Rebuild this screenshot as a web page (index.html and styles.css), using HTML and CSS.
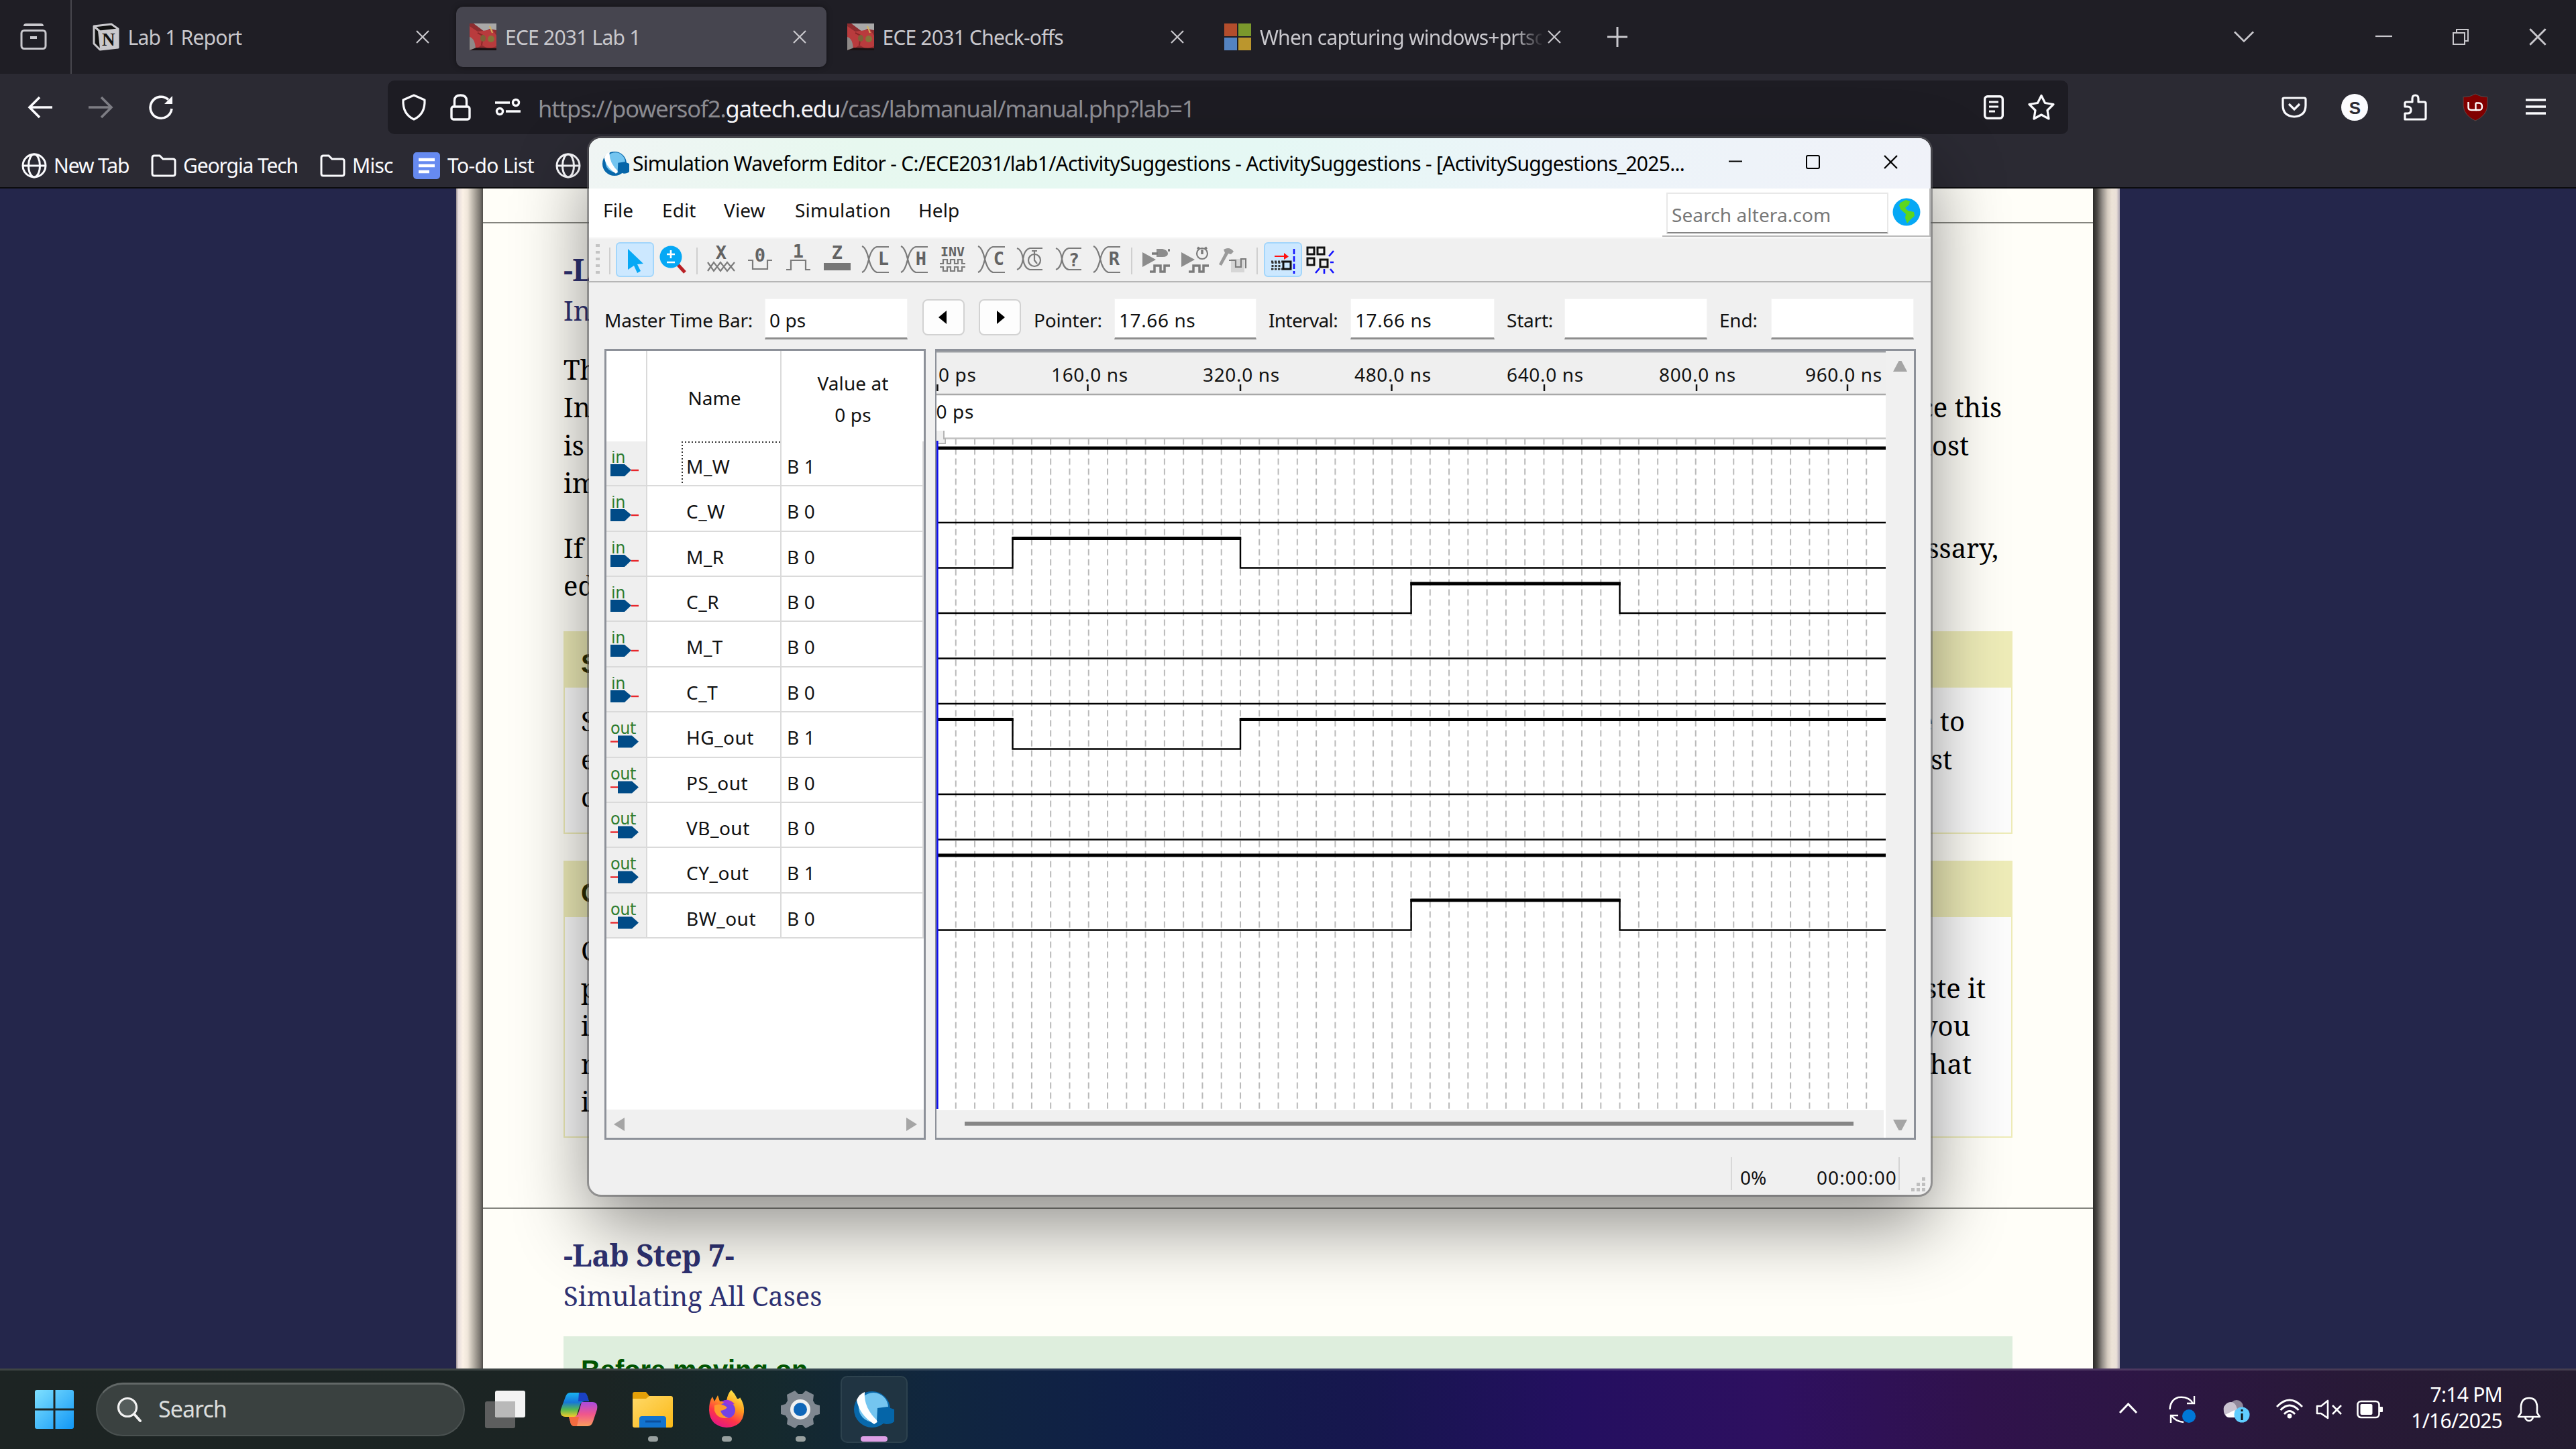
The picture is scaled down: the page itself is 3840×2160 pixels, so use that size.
FILE: index.html
```html
<!DOCTYPE html>
<html lang="en">
<head>
<meta charset="utf-8">
<title>ECE 2031 Lab 1</title>
<link rel="stylesheet" href="styles.css">
</head>
<body>
<svg class="defs" aria-hidden="true">
  <defs>
    <symbol id="x" viewBox="0 0 20 20"><path d="M1 1 19 19M19 1 1 19" fill="none" stroke="currentColor" stroke-width="2.2"/></symbol>
    <symbol id="globe" viewBox="0 0 38 38"><g fill="none" stroke="currentColor" stroke-width="3"><circle cx="19" cy="19" r="17"/><ellipse cx="19" cy="19" rx="8.5" ry="17"/><path d="M2 19H36"/></g></symbol>
    <symbol id="folder" viewBox="0 0 38 34"><path d="M2 29V5Q2 2 5 2H13L18 7H33Q36 7 36 10V29Q36 32 33 32H5Q2 32 2 29Z" fill="none" stroke="currentColor" stroke-width="3"/></symbol>
    <symbol id="car" viewBox="0 0 40 40"><path d="M0 0H40V40H0Z" fill="#8d2c2f"/><path d="M6 0H40V10L30 8 22 12Z" fill="#a9a8a8"/><path d="M0 4 12 12 34 9 40 18V34L28 38 18 32 10 38 0 22Z" fill="#b93b3d"/><path d="M12 14 20 18 18 32" fill="none" stroke="#8c2629" stroke-width="2"/><path d="M0 20Q8 22 9 38L0 40Z" fill="#8e8a88"/><path d="M10 36 40 37V40H0Z" fill="#1b1112"/><ellipse cx="20" cy="22" rx="4" ry="5" fill="#7c6238"/><ellipse cx="32" cy="23" rx="5" ry="5" fill="#85743a"/><path d="M30 4 34 14" stroke="#d4b45c" stroke-width="2"/></symbol>
    <symbol id="quartus" viewBox="0 0 60 56"><ellipse cx="27" cy="28" rx="27" ry="27" fill="#0868ab"/><ellipse cx="29" cy="25" rx="22" ry="22" fill="#74c5f0"/><path d="M4 14Q8 5 16 2Q14 26 36 46L30 50Q8 36 4 14Z" fill="#fff"/><path d="M35 26 50 24Q54 26 60 28V46Q56 50 48 50L34 46Z" fill="#0565a8"/></symbol>
    <symbol id="pin-in" viewBox="0 0 44 44"><text x="1" y="18" class="pin-label">in</text><path d="M0 20H21L31 28.500 21 38H0Z" fill="#004b87"/><path d="M31 29H42" stroke="#e8272c" stroke-width="2.400"/></symbol>
    <symbol id="pin-out" viewBox="0 0 44 44"><text x="0" y="18" class="pin-label">out</text><path d="M11 20.500H32L42 29.500 32 38.500H11Z" fill="#004b87"/><path d="M0 29.500H11" stroke="#e8272c" stroke-width="2.400"/></symbol>
    <pattern id="grid" x="1423.800" y="654.500" width="28.280" height="15" patternUnits="userSpaceOnUse"><path d="M1 0V9.400" stroke="#b9b9b9" stroke-width="2"/></pattern>
    <linearGradient id="win" x1="0" y1="0" x2="1" y2="1"><stop offset="0" stop-color="#7fe0ff"/><stop offset="1" stop-color="#1197f5"/></linearGradient>
    <linearGradient id="cpa" x1="0" y1="0" x2="0" y2="1"><stop offset="0" stop-color="#19b3f2"/><stop offset=".4" stop-color="#1676d8"/><stop offset=".7" stop-color="#55b84f"/><stop offset="1" stop-color="#f4cb2b"/></linearGradient>
    <linearGradient id="cpb" x1="0" y1="0" x2="0" y2="1"><stop offset="0" stop-color="#a94be0"/><stop offset=".5" stop-color="#f0568c"/><stop offset="1" stop-color="#fb9d5c"/></linearGradient>
    <linearGradient id="fold" x1="0" y1="0" x2="1" y2="1"><stop offset="0" stop-color="#ffd968"/><stop offset="1" stop-color="#fbb917"/></linearGradient>
    <linearGradient id="fox" x1=".8" y1="0" x2=".3" y2="1"><stop offset="0" stop-color="#fff44f"/><stop offset=".4" stop-color="#ff9a1f"/><stop offset=".7" stop-color="#ff3647"/><stop offset="1" stop-color="#e31587"/></linearGradient>
  </defs>
</svg>

<header class="browser">
  <nav class="tabs">
    <div class="tab-view"><svg width="40" height="40" viewBox="0 0 40 40"><path d="M7 4Q7 2 9 2H31Q33 2 33 4" fill="none" stroke="currentColor" stroke-width="4"/><rect x="2" y="10.500" width="36" height="27" rx="4" fill="none" stroke="currentColor" stroke-width="3"/><path d="M15 21H25" stroke="currentColor" stroke-width="4"/></svg></div>
    <div class="tab"><svg width="40" height="40" viewBox="0 0 40 40"><path d="M2 4 28 1 38 8V36L11 39 2 30Z" fill="#111" stroke="#c9c8cc" stroke-width="3" stroke-linejoin="round"/><path d="M8 11 37 9V36L11 38Z" fill="#c9c8cc"/><path d="M3 5 11 12 37 9" fill="none" stroke="#c9c8cc" stroke-width="3"/><path d="M13 14 34 12.500V34L14 35.500Z" fill="#c9c8cc"/><text x="14" y="33" font-family="Liberation Serif" font-size="27" font-weight="700" fill="#111">N</text></svg><span class="tab-title">Lab 1 Report</span><svg class="close"><use href="#x"/></svg></div>
    <div class="tab active"><svg width="40" height="40"><use href="#car"/></svg><span class="tab-title">ECE 2031 Lab 1</span><svg class="close"><use href="#x"/></svg></div>
    <div class="tab"><svg width="40" height="40"><use href="#car"/></svg><span class="tab-title">ECE 2031 Check-offs</span><svg class="close"><use href="#x"/></svg></div>
    <div class="tab"><svg width="40" height="40" viewBox="0 0 40 40"><path d="M0 0H19V19H0Z" fill="#b34d2c"/><path d="M21 0H40V19H21Z" fill="#7a982c"/><path d="M0 21H19V40H0Z" fill="#5483c1"/><path d="M21 21H40V40H21Z" fill="#bb962d"/></svg><span class="tab-title fade">When capturing windows+prtsc</span><svg class="close"><use href="#x"/></svg></div>
    <svg class="new-tab" width="30" height="30" viewBox="0 0 30 30"><path d="M15 0V30M0 15H30" stroke="currentColor" stroke-width="3"/></svg>
    <div class="controls">
      <svg class="list-tabs" width="30" height="18" viewBox="0 0 30 18"><path d="M1 1.500 15 15.500 29 1.500" fill="none" stroke="currentColor" stroke-width="2.600"/></svg>
      <svg width="25" height="24" viewBox="0 0 25 24"><path d="M0 11H25" stroke="currentColor" stroke-width="2.200"/></svg>
      <svg width="24" height="24" viewBox="0 0 24 24"><path d="M1 6H18V23H1ZM6 6V1H23V18H18" fill="none" stroke="currentColor" stroke-width="2"/></svg>
      <svg width="26" height="26"><use href="#x"/></svg>
    </div>
  </nav>

  <div class="toolbar">
    <svg width="36" height="36" viewBox="0 0 36 36"><path d="M36 18H2M17 3 2 18 17 33" fill="none" stroke="currentColor" stroke-width="3.600"/></svg>
    <svg class="dim" width="36" height="36" viewBox="0 0 36 36"><path d="M0 18H34M19 3 34 18 19 33" fill="none" stroke="currentColor" stroke-width="3.600"/></svg>
    <svg width="36" height="36" viewBox="0 0 36 36"><path d="M34 20A16 16 0 1 1 29 6.500" fill="none" stroke="currentColor" stroke-width="3.600"/><path d="M35 1V13H23Z" fill="currentColor"/></svg>
    <div class="url">
      <svg width="36" height="40" viewBox="0 0 36 40"><path d="M18 2 34 9Q35 30 18 38 1 30 2 9Z" fill="none" stroke="currentColor" stroke-width="3.200" stroke-linejoin="round"/></svg>
      <svg width="31" height="40" viewBox="0 0 31 40"><rect x="2" y="19" width="27" height="19" rx="3" fill="none" stroke="currentColor" stroke-width="3.400"/><path d="M6.500 19V10Q6.500 2 15.500 2T24.500 10V19" fill="none" stroke="currentColor" stroke-width="3.400"/></svg>
      <svg class="perm" width="38" height="26" viewBox="0 0 38 26"><g fill="none" stroke="currentColor" stroke-width="3.400"><circle cx="31" cy="6" r="4.500"/><circle cx="7" cy="19" r="4.500"/><path d="M0 6H22M16 19H38"/></g></svg>
      <p class="address">https://powersof2.<b>gatech.edu</b>/cas/labmanual/manual.php?lab=1</p>
      <svg width="30" height="36" viewBox="0 0 30 36"><rect x="1.700" y="1.700" width="26.600" height="32.600" rx="4" fill="none" stroke="currentColor" stroke-width="3.400"/><path d="M8 10H22M8 17H22M8 24H17" stroke="currentColor" stroke-width="3.200"/></svg>
      <svg class="star" width="40" height="40" viewBox="0 0 40 40"><path d="M20 2.500 25.500 13.500 38 15.500 29 24.500 31 37 20 31 9 37 11 24.500 2 15.500 14.500 13.500Z" fill="none" stroke="currentColor" stroke-width="3.200" stroke-linejoin="round"/></svg>
    </div>
    <div class="extensions">
      <svg width="40" height="40" viewBox="0 0 40 40"><path d="M3 7Q3 6 5 6H35Q37 6 37 8V17Q37 33 20 34 3 33 3 17Z" fill="none" stroke="currentColor" stroke-width="3.200"/><path d="M12 15 20 23 28 15" fill="none" stroke="currentColor" stroke-width="3.200"/></svg>
      <svg width="40" height="40" viewBox="0 0 40 40"><circle cx="20" cy="20" r="20" fill="#fbfbfe"/><text x="20" y="29.500" text-anchor="middle" font-family="Liberation Sans" font-weight="700" font-size="26" fill="#2b2a33">S</text></svg>
      <svg width="40" height="40" viewBox="0 0 40 40"><path d="M5 38V29H9Q14 29 14 24T9 19H5V14Q5 12 7 12H16V7Q16 2 20.500 2T25 7V12H34Q36 12 36 14V36Q36 38 34 38Z" fill="none" stroke="currentColor" stroke-width="3.200" stroke-linejoin="round"/></svg>
      <svg width="40" height="40" viewBox="0 0 40 40"><path d="M20 0Q28 5 38 4.500V18Q37 32 20 40 3 32 2 18V4.500Q12 5 20 0Z" fill="#800000" stroke="#555" stroke-width=".8"/><path d="M9.500 12V20Q9.500 24 14 24H20.500V13.500" fill="none" stroke="#fff" stroke-width="2.400"/><path d="M20.500 13.500H25Q30 13.500 30 19T25 24H20.500" fill="none" stroke="#fff" stroke-width="2.400"/></svg>
      <svg width="40" height="40" viewBox="0 0 40 40"><path d="M5 9H35M5 19H35M5 29H35" stroke="currentColor" stroke-width="3.400"/></svg>
    </div>
  </div>

  <div class="bookmarks">
    <span class="bm w1"><svg width="38" height="38"><use href="#globe"/></svg>New Tab</span>
    <span class="bm w2"><svg width="38" height="34"><use href="#folder"/></svg>Georgia Tech</span>
    <span class="bm w3"><svg width="38" height="34"><use href="#folder"/></svg>Misc</span>
    <span class="bm w4"><svg width="40" height="40" viewBox="0 0 40 40"><rect width="40" height="40" rx="5" fill="#668af0"/><path d="M8 11H32M8 20H32M8 29H24" stroke="#fff" stroke-width="4.500"/></svg>To-do List</span>
    <span class="bm"><svg width="38" height="38"><use href="#globe"/></svg></span>
  </div>
</header>

<main class="desk">
  <article class="page">
    <section class="step six">
      <h2>-Lab Step 6-</h2>
      <h3>In-System</h3>
      <div class="para"><p><span>Th</span></p><p><span>In</span><span class="r16">since this</span></p><p><span>is</span><span class="r65">most</span></p><p><span>im</span></p></div>
      <div class="para second"><p><span>If</span><span class="r21">necessary,</span></p><p><span>ed</span></p></div>
      <div class="note"><h4>S</h4><div class="note-body"><p><span>S</span><span class="r71">have to</span></p><p><span>e</span><span class="r91">most</span></p><p><span>c</span></p></div></div>
      <div class="note"><h4>C</h4><div class="note-body"><p><span>C</span></p><p><span>p</span><span class="r41">paste it</span></p><p><span>i</span><span class="r63">you</span></p><p><span>n</span><span class="r61">that</span></p><p><span>i</span></p></div></div>
    </section>
    <section class="step">
      <h2>-Lab Step 7-</h2>
      <h3>Simulating All Cases</h3>
      <div class="note green"><h4>Before moving on</h4></div>
    </section>
  </article>
</main>

<div class="window">
  <div class="titlebar">
    <svg width="40" height="40"><use href="#quartus"/></svg>
    <span class="title">Simulation Waveform Editor - C:/ECE2031/lab1/ActivitySuggestions - ActivitySuggestions - [ActivitySuggestions_2025...</span>
    <div class="win-controls">
      <svg width="20" height="20" viewBox="0 0 20 20"><path d="M0 9.500H20" stroke="#000" stroke-width="2"/></svg>
      <svg width="21" height="21" viewBox="0 0 21 21"><rect x="1" y="1" width="19" height="19" rx="2" fill="none" stroke="#000" stroke-width="2"/></svg>
      <svg width="21" height="21"><use href="#x"/></svg>
    </div>
  </div>

  <div class="menubar">
    <span class="m1">File</span><span class="m2">Edit</span><span class="m3">View</span><span class="m4">Simulation</span><span>Help</span>
    <div class="search-altera"><span class="field">Search altera.com</span><svg width="42" height="42" viewBox="0 0 42 42"><circle cx="21" cy="21" r="20.500" fill="#06a8f5"/><path d="M12 7 20 3 26 5 25 10 19 15 23 19 32 21 33 27 27 32 22 38 19 30 20 24 12 17 10 11Z" fill="#5cd71c"/></svg></div>
  </div>

  <div class="tools">
    <i class="grip"></i><i class="sep s1"></i>
    <span class="tool on"><svg width="42" height="42" viewBox="0 0 42 42"><path d="M10 5 33 27 24 28 29 38 24 41 19 30 10 36Z" fill="#06a8f5"/></svg></span>
    <span class="tool"><svg width="42" height="42" viewBox="0 0 42 42"><path d="M27 28 38 40" stroke="#b92025" stroke-width="5"/><circle cx="17" cy="17" r="16.500" fill="#06a8f5"/><path d="M17 7V19M11 13H23M11 25H23" stroke="#fff" stroke-width="2.600"/></svg></span>
    <i class="sep s2"></i>
    <span class="tool gray"><svg viewBox="0 0 42 42"><text x="21" y="20">X</text><path class="l" d="M1 25 10 38 20 25 30 38 41 25M1 38 10 25 20 38 30 25 41 38"/></svg></span>
    <span class="tool gray"><svg viewBox="0 0 42 42"><text x="21" y="24">0</text><path class="l" d="M3 22H10V35H32V22H39"/></svg></span>
    <span class="tool gray"><svg viewBox="0 0 42 42"><text x="21" y="18">1</text><path class="l" d="M3 36H10V22H32V36H39"/></svg></span>
    <span class="tool gray"><svg viewBox="0 0 42 42"><text x="21" y="20">Z</text><path fill="#777" d="M1 26H41V37H1Z"/></svg></span>
    <span class="tool gray"><svg viewBox="0 0 42 42"><path class="l" d="M1 1Q7 3 11 20T23 40H41M1 40Q7 38 11 21T23 2H41"/><text x="33" y="29">L</text></svg></span>
    <span class="tool gray"><svg viewBox="0 0 42 42"><path class="l" d="M1 1Q7 3 11 20T23 40H41M1 40Q7 38 11 21T23 2H41"/><text x="31" y="29">H</text></svg></span>
    <span class="tool gray"><svg viewBox="0 0 42 42"><text class="inv" x="21" y="16">INV</text><path class="l" d="M2 27H7V21H13V27H18V21H24V27H29V21H35V27H40M2 32H7V38H13V32H18V38H24V32H29V38H35V32H40"/></svg></span>
    <span class="tool gray"><svg viewBox="0 0 42 42"><path class="l" d="M1 1Q7 3 11 20T23 40H41M1 40Q7 38 11 21T23 2H41"/><text x="32" y="29">C</text></svg></span>
    <span class="tool gray"><svg viewBox="0 0 42 42"><path class="l" d="M2 4Q9 6 11 20T21 36H40M2 36Q9 34 11 20T21 4H40"/><circle class="l" cx="28" cy="22" r="9"/><path class="l" d="M28 8V22L32 27M24 8H32"/></svg></span>
    <span class="tool gray"><svg viewBox="0 0 42 42"><path class="l" d="M2 4Q9 6 11 20T21 36H40M2 36Q9 34 11 20T21 4H40"/><text x="29" y="31">?</text></svg></span>
    <span class="tool gray"><svg viewBox="0 0 42 42"><path class="l" d="M1 1Q7 3 11 20T23 40H41M1 40Q7 38 11 21T23 2H41"/><text x="32" y="29">R</text></svg></span>
    <i class="sep s3"></i>
    <span class="tool gray"><svg viewBox="0 0 42 42"><path fill="#8c8c8c" d="M1 10 21 21 1 32ZM22 5H31Q39 7 39 12T31 17H22Z"/><path class="l w" d="M39 7H42M15 12H24M12 39H19V30H28V39H34V30H42"/></svg></span>
    <span class="tool gray"><svg viewBox="0 0 42 42"><path fill="#8c8c8c" d="M1 10 21 21 1 32Z"/><circle class="l" cx="32" cy="12" r="8"/><path class="l w" d="M32 6V13M25 3 28 5M39 3 36 5M12 39H19V30H28V39H34V30H42"/></svg></span>
    <span class="tool gray"><svg viewBox="0 0 42 42"><path fill="#9a9a9a" d="M7 6Q16 1 22 9L18 13 14 12 4 30 0 28 9 11Z"/><path d="M18 20H38V40H18Z" fill="#d6d6d6"/><path class="l" d="M15 22H25V32H33V20H40V34"/></svg></span>
    <i class="sep s4"></i>
    <span class="tool on"><svg width="42" height="42" viewBox="0 0 42 42"><path d="M8 15H22V11L29 16.500 22 21V17H8Z" fill="#f11"/><path d="M3 24H20M3 35H20M5 24V36M10 24V36M15 24V36" stroke="#333" stroke-width="3" stroke-dasharray="3 2"/><path d="M21 24H32V35H21Z" fill="none" stroke="#111" stroke-width="3"/><path d="M37 5V42" stroke="#1313ff" stroke-width="2.600" stroke-dasharray="8 3"/></svg></span>
    <span class="tool last"><svg width="42" height="42" viewBox="0 0 42 42"><path d="M2 3H12V13H2ZM17 3H27V13H17ZM2 19H12V29H2ZM21 21H32V32H21Z" fill="none" stroke="#111" stroke-width="3"/><path d="M34 16 41 8M36 25H41M20 34 14 41M27 35V42M36 35 41 41" stroke="#1313ff" stroke-width="2.600"/></svg></span>
  </div>

  <div class="times">
    <label class="t1">Master Time Bar:</label><span class="field f1">0 ps</span>
    <span class="step-btn b1"><svg width="12" height="20" viewBox="0 0 12 20"><path d="M12 0V20L0 10Z"/></svg></span><span class="step-btn b2"><svg width="12" height="20" viewBox="0 0 12 20"><path d="M0 0V20L12 10Z"/></svg></span>
    <label class="t2">Pointer:</label><span class="field f2 num">17.66 ns</span>
    <label class="t3">Interval:</label><span class="field f3 num">17.66 ns</span>
    <label class="t4">Start:</label><span class="field f4"></span>
    <label class="t5">End:</label><span class="field f4"></span>
  </div>

  <div class="panels">
    <div class="names">
      <div class="row head"><span></span><span>Name</span><span>Value at<br>0 ps</span></div>
      <div class="row"><span><svg><use href="#pin-in"/></svg></span><span class="focus">M_W</span><span>B 1</span></div>
      <div class="row"><span><svg><use href="#pin-in"/></svg></span><span>C_W</span><span>B 0</span></div>
      <div class="row"><span><svg><use href="#pin-in"/></svg></span><span>M_R</span><span>B 0</span></div>
      <div class="row"><span><svg><use href="#pin-in"/></svg></span><span>C_R</span><span>B 0</span></div>
      <div class="row"><span><svg><use href="#pin-in"/></svg></span><span>M_T</span><span>B 0</span></div>
      <div class="row"><span><svg><use href="#pin-in"/></svg></span><span>C_T</span><span>B 0</span></div>
      <div class="row"><span><svg><use href="#pin-out"/></svg></span><span>HG_out</span><span>B 1</span></div>
      <div class="row"><span><svg><use href="#pin-out"/></svg></span><span>PS_out</span><span>B 0</span></div>
      <div class="row"><span><svg><use href="#pin-out"/></svg></span><span>VB_out</span><span>B 0</span></div>
      <div class="row"><span><svg><use href="#pin-out"/></svg></span><span>CY_out</span><span>B 1</span></div>
      <div class="row"><span><svg><use href="#pin-out"/></svg></span><span>BW_out</span><span>B 0</span></div>
      <div class="names-scroll"><svg width="16" height="20" viewBox="0 0 16 20"><path d="M16 0V20L0 10Z" fill="#a5a5a5"/></svg><svg width="16" height="20" viewBox="0 0 16 20"><path d="M0 0V20L16 10Z" fill="#a5a5a5"/></svg></div>
    </div>

    <div class="waves">
      <div class="wave-col">
        <svg class="plot" width="1415" height="1132" viewBox="1396 524 1415 1132">
          <path d="M1396 524H2811V588H1396Z" fill="#efefef"/>
          <path d="M1396 525H2811" stroke="#9a9da2" stroke-width="3"/>
          <path d="M1396 589H2811" stroke="#a8a8a8" stroke-width="2.500"/>
          <g stroke="#111" stroke-width="2.500"><path d="M1397.500 574V584M1621.500 574V584M1849 574V584M2074.500 574V584M2302 574V584M2529 574V584M2754 574V584"/></g>
          <g class="ticks"><text x="1399" y="569.500">0 ps</text><text x="1567" y="569.500">160.0 ns</text><text x="1793" y="569.500">320.0 ns</text><text x="2019" y="569.500">480.0 ns</text><text x="2246" y="569.500">640.0 ns</text><text x="2473" y="569.500">800.0 ns</text><text x="2691" y="569.500">960.0 ns</text><text x="1395.500" y="625">0 ps</text></g>
          <path d="M1423 655H2786V1654H1423Z" fill="url(#grid)"/>
          <path d="M1396 654.500H2811" stroke="#c0c0c0" stroke-width="2.500"/>
          <path d="M1396 643H1407V661H1396Z" fill="#efefef"/><path d="M1407 643V655H1409V662H1398" fill="none" stroke="#b5b5b5" stroke-width="2"/>
          <g fill="none" stroke="#000" stroke-width="2.400">
            <path d="M1396 780H2811M1396 982.500H2811M1396 1050H2811M1396 1185H2811M1396 1252.500H2811"/>
            <path d="M1396 847.500H1509.500V802M1849 802V847.500H2811"/>
            <path d="M1396 915H2103.600V869M2414.500 869V915H2811"/>
            <path d="M1509.500 1072V1117.500H1849V1072"/>
            <path d="M1396 1387.500H2103.600V1341M2414.500 1341V1387.500H2811"/>
          </g>
          <g stroke="#000" stroke-width="5"><path d="M1396 669H2811M1508.400 803.500H1850.200M2102.400 871H2415.700M1396 1073.500H1510.700M1847.800 1073.500H2811M1396 1276H2811M2102.400 1343H2415.700"/></g>
          <path d="M1397 658V1654" stroke="#1010f0" stroke-width="3.400"/>
        </svg>
        <div class="wave-scroll"><i></i></div>
      </div>
      <div class="vscroll"><svg width="21" height="16" viewBox="0 0 21 16"><path d="M0 16H21L12.500 0H8.500Z" fill="#a5a5a5"/></svg><svg width="21" height="16" viewBox="0 0 21 16"><path d="M0 0H21L12.500 16H8.500Z" fill="#a5a5a5"/></svg></div>
    </div>
  </div>

  <div class="status"><span class="pct">0%</span><span class="clock">00:00:00</span><svg width="22" height="22" viewBox="0 0 22 22"><path d="M16 0H21V5H16ZM8 8H13V13H8ZM16 8H21V13H16ZM0 16H5V21H0ZM8 16H13V21H8ZM16 16H21V21H16Z" fill="#bfbfbf"/></svg></div>
</div>

<footer class="taskbar">
  <svg class="start" width="58" height="58" viewBox="0 0 58 58"><path d="M0 3Q0 0 3 0H27.500V27.500H0ZM30.500 0H55Q58 0 58 3V27.500H30.500ZM0 30.500H27.500V58H3Q0 58 0 55ZM30.500 30.500H58V55Q58 58 55 58H30.500Z" fill="url(#win)"/></svg>
  <div class="search"><svg width="38" height="38" viewBox="0 0 38 38"><circle cx="16" cy="16" r="13.500" fill="#555d5c" stroke="#f2f2f2" stroke-width="3.200"/><path d="M26 26 35 36" stroke="#f2f2f2" stroke-width="4" stroke-linecap="round"/></svg><span>Search</span></div>
  <div class="apps">
    <span class="app"><svg width="60" height="60" viewBox="0 0 60 60"><rect x="0" y="18" width="45" height="40" rx="3" fill="#5d5e5e"/><rect x="15" y="2" width="45" height="40" rx="3" fill="#f3f3f3"/><path d="M15 18H45V42H18Q15 42 15 39Z" fill="#b9b9b9"/></svg></span>
    <span class="app"><svg width="60" height="60" viewBox="0 0 60 60"><path d="M17 5H37Q41 5 43 12L45 18H38Q33 18 31 25L26 41H10Q1 41 3 30L10 11Q12 5 17 5Z" fill="url(#cpa)"/><path d="M30 5H38Q42 6 43 12L45 18H29Z" fill="#1a41c4"/><path d="M43 55H23Q18 55 17 48L15 41H23Q27 41 30 33L34 19H50Q59 19 57 30L51 48Q49 55 43 55Z" fill="url(#cpb)"/><path d="M15 41H30L27 55H23Q18 55 17 48Z" fill="#f36b3f"/></svg></span>
    <span class="app run"><svg width="60" height="60" viewBox="0 0 60 60"><path d="M0 7Q0 4 3 4H20L25 10V20H0Z" fill="#e3a008"/><path d="M0 14H20L25 10H57Q60 10 60 13V54Q60 57 57 57H3Q0 57 0 54Z" fill="url(#fold)"/><path d="M10 57V44Q10 40 14 40H46Q50 40 50 44V57Z" fill="#1273cf"/><path d="M19 48H42" stroke="#0a4f9e" stroke-width="3"/></svg></span>
    <span class="app run"><svg width="60" height="60" viewBox="0 0 60 60"><path d="M37 1Q43 7 46 14 50 14 50 12 57 22 56 34 54 56 30 57 5 55 4 31 4 18 9 11L12 18 17 9 20 18 30 17Q32 6 37 1Z" fill="url(#fox)"/><circle cx="31" cy="31" r="12" fill="#7542e4"/><path d="M12 24Q22 20 31 27 28 31 21 32 24 41 33 42 17 46 12 32Z" fill="#ff9a2b"/><path d="M23 18Q33 12 42 22L34 24Z" fill="#9a35d8"/></svg></span>
    <span class="app run"><svg width="60" height="60" viewBox="0 0 60 60"><path d="M22 2 27 7H33L38 2 50 8 49 17 52 22 59 24V37L52 39 49 44 50 52 38 58 33 53H27L22 58 10 52 11 44 8 39 1 37V24L8 22 11 17 10 8Z" fill="#7f8790"/><circle cx="30" cy="30" r="15" fill="#f1f1f1"/><circle cx="30" cy="30" r="10" fill="#0f66b8"/></svg></span>
    <span class="app current"><svg width="60" height="56"><use href="#quartus"/></svg></span>
  </div>
  <div class="tray">
    <svg width="40" height="40" viewBox="0 0 40 40"><path d="M7 25 19.500 12 32 25" fill="none" stroke="#fff" stroke-width="3"/></svg>
    <svg class="g40" width="40" height="40" viewBox="0 0 40 40"><path d="M1.500 20Q2 6 14 2 30 0 36 11M38 0V11H27M22 39Q10 38 4 29M3 40V29H14" fill="none" stroke="#fff" stroke-width="2.400"/><circle cx="30" cy="30" r="10" fill="#0078d7"/></svg>
    <svg class="g40" width="40" height="40" viewBox="0 0 40 40"><circle cx="21" cy="16" r="10" fill="#8f879a"/><path d="M2 24Q0 14 8 10 16 7 20 14L26 30H10Q3 30 2 24Z" fill="#c9c3d0"/><path d="M4 28 18 21V32H10Q6 32 4 28Z" fill="#fff"/><circle cx="29" cy="28" r="11.500" fill="#60cdff"/><path d="M29 26V36M29 20V23" stroke="#111" stroke-width="3"/></svg>
    <svg class="g40" width="40" height="40" viewBox="0 0 40 40"><g fill="none" stroke="#fff" stroke-width="2.800"><path d="M1 16Q20-4 39 16M6.500 21Q20 7 33.500 21M12 27Q20 18 28 27"/></g><circle cx="20" cy="30" r="3.400" fill="#fff"/></svg>
    <svg class="g19" width="40" height="40" viewBox="0 0 40 40"><path d="M2 15H8L18 7V33L8 26H2Z" fill="none" stroke="#fff" stroke-width="2.600" stroke-linejoin="round"/><path d="M25 14 38 27M38 14 25 27" stroke="#fff" stroke-width="2.600"/></svg>
    <svg class="g21" width="40" height="40" viewBox="0 0 40 40"><rect x="1.500" y="8" width="32" height="24" rx="5" fill="none" stroke="#fff" stroke-width="2.600"/><rect x="5.500" y="12" width="18" height="16" rx="2" fill="#fff"/><path d="M34 16H38Q39 16 39 17V23Q39 24 38 24H34Z" fill="#fff"/></svg>
    <div class="when">7:14 PM<br>1/16/2025</div>
    <svg class="bell" width="40" height="40" viewBox="0 0 40 40"><path d="M4 31 8 25V15Q9 3 20 3T32 15V25L36 31Z" fill="none" stroke="#fff" stroke-width="2.600" stroke-linejoin="round"/><path d="M14 32Q16 37 20 37T26 32" fill="none" stroke="#fff" stroke-width="2.600"/></svg>
  </div>
</footer>
</body>
</html>
```
FILE: styles.css
```css
* { box-sizing: border-box; }
html, body { margin: 0; }
body {
  width: 3840px; height: 2160px; overflow: hidden; position: relative;
  display: flex; flex-direction: column;
  font: 30px/40px "Noto Sans", sans-serif; background: #24264b;
}
p, h2, h3, h4 { margin: 0; font-weight: 400; }
svg { display: block; flex: none; overflow: visible; }
.defs { position: absolute; width: 0; height: 0; }

/* browser chrome */
.browser { height: 281px; flex: none; background: #2b2a33; border-bottom: 2px solid #0c0c0e; color: #fbfbfe; letter-spacing: -.78px; }
.tabs { height: 110px; background: #1f1e25; display: flex; align-items: center; color: #c9c8cd; }
.tab-view { width: 107px; height: 110px; padding: 35px 0 0 30px; border-right: 2px solid #47464d; }
.tab { width: 552px; height: 90px; margin-left: 10.5px; padding: 0 30px 0 20px; display: flex; align-items: center; border-radius: 10px; }
.tab.active { background: #46454f; box-shadow: 0 0 8px rgba(0,0,0,.4); }
.tab-title { flex: 1; margin: 2px 9px 0 13px; white-space: nowrap; overflow: hidden; }
.tab-title.fade { mask-image: linear-gradient(90deg, #000 90%, transparent 101%); }
.close { width: 20px; height: 20px; }
.new-tab { margin-left: 39px; }
.controls { margin-left: auto; padding-right: 44px; display: flex; align-items: center; gap: 90px; }
.list-tabs { margin-right: 91px; }

.toolbar { height: 90px; padding: 10px 40px 0 42px; display: flex; align-items: center; gap: 54px; }
.dim { opacity: .4; }
.url { width: 2505px; height: 80px; margin-left: 266px; padding: 0 20px 0 21px; border-radius: 10px; background: #1d1c23; display: flex; align-items: center; gap: 36px; }
.address { flex: 1; margin: 3px 0 0 -10px; font-size: 34.5px; letter-spacing: -1.1px; color: #8f8f95; white-space: nowrap; }
.address b { font-weight: 400; color: #fbfbfe; }
.extensions { margin-left: auto; display: flex; gap: 50px; }

.bookmarks { height: 80px; padding: 13px 0 0 32px; display: flex; align-items: center; }
.bm { display: flex; align-items: center; gap: 10px; white-space: nowrap; }
.w1 { width: 193px; letter-spacing: -1.1px; } .w2 { width: 252px; letter-spacing: -1.1px; } .w3 { width: 139px; } .w4 { width: 212px; gap: 11px; letter-spacing: -.65px; }

/* lab manual page */
.desk { flex: 1; overflow: hidden; display: flex; justify-content: center; }
.page { width: 2480px; height: 1759px; padding-top: 50px; overflow: hidden;
  background:
    linear-gradient(90deg, #9c9293 0, #e6dcdc 3px, #fbf1e6 10px, #efe6da 17px, #b0aaa0 27px, #77736d 36px, #4e4c48 40px) 0 0/40px 100% no-repeat,
    linear-gradient(90deg, #2a2927 0, #4b4845 6px, #96908a 14px, #d6ccc1 22px, #ece3d7 28px, #eae0d8 35px, #a6a0b0 40px) 100% 0/40px 100% no-repeat,
    #fffef8;
  font: 40px/56.4px "Noto Serif", serif; color: #000; }
.step { margin: 0 40px; padding: 38px 120px 0; border-top: 2px solid #85857f; }
.six { height: 1469px; }
.step h2 { font-weight: 700; font-size: 45px; line-height: 62px; letter-spacing: -.62px; color: #2f3272; }
.step h3 { font-size: 40px; line-height: 60px; color: #2f3272; margin-bottom: 30px; letter-spacing: 0; }
.step p { height: 56.4px; display: flex; justify-content: space-between; white-space: nowrap; }
.second { margin-top: 40px; }
.r16 { margin-right: 16px; } .r65 { margin-right: 65px; } .r21 { margin-right: 21px; }
.r71 { margin-right: 43px; } .r91 { margin-right: 62px; } .r41 { margin-right: 12px; } .r63 { margin-right: 35px; } .r61 { margin-right: 33px; }
.note { margin-top: 40px; border: 2px solid #eeecb8; background: #fcfcfc; }
.note h4 { height: 82px; padding: 10px 24px 0; background: #eeecb8; font: 700 40px/72px "Liberation Sans", sans-serif; color: #2d2d00; }
.note-body { padding: 22px 26px 24px 24px; }
.green { margin-top: 0; border-color: #deeedd; background: #deeedd; }
.green h4 { background: none; color: #005500; letter-spacing: -.1px; padding-top: 12px; }

/* editor window */
.window { position: absolute; left: 878px; top: 206px; width: 2000px; height: 1575px; border-radius: 18px; overflow: hidden;
  display: flex; flex-direction: column; background: #f0f0f0; color: #111; font-size: 28px; letter-spacing: .1px;
  box-shadow: 0 0 0 3px rgba(95,95,98,.55), 0 45px 110px rgba(0,0,0,.45); }
.titlebar { height: 75px; flex: none; padding: 0 49px 0 20px; display: flex; align-items: center; gap: 5px; font-size: 30px; letter-spacing: -.71px; color: #000;
  background: linear-gradient(100deg, #f0f5f4 0, #e7f8ef 20%, #e5f8f4 50%, #ecf4f9 72%, #f0f2f9 100%); }
.title { white-space: nowrap; }
.win-controls { margin: -5px 0 0 auto; display: flex; gap: 95px; align-items: center; }
.menubar { height: 75px; flex: none; padding-left: 21px; background: #fff; border-bottom: 2px solid #f4f4f4; display: flex; line-height: 64px; }
.m1 { width: 88px; } .m2 { width: 92px; } .m3 { width: 106px; } .m4 { width: 184px; letter-spacing: .25px; }
.search-altera { margin-left: auto; width: 400px; height: 72px; padding: 6px 13px 0 6px; display: flex; justify-content: space-between; border: solid #b9b9b9; border-width: 0 2px 2px 0; }
.search-altera .field { width: 331px; height: 61px; line-height: 63px; color: #777; border: 2px solid #e8e8e8; border-bottom-color: #868686; }
.search-altera svg { margin-top: 8px; }
.field { background: #fff; border: 1px solid #f4f4f4; border-bottom: 3px solid #8d8d8d; padding-left: 6px; white-space: nowrap; }

.tools { height: 65px; flex: none; padding: 5px 0 0 10px; display: flex; align-items: flex-start; border-bottom: 2px solid #b6b6b6; }
.grip { width: 6px; height: 48px; margin-top: 3px; background: repeating-linear-gradient(#c4c4c4 0 4px, transparent 4px 10px); }
.sep { width: 2px; height: 40px; margin-top: 8px; background: #cfcfcf; }
.s1 { margin: 8px 8px 0 14px; } .s2 { margin-left: 6px; margin-right: 6.5px; } .s3 { margin-left: 7px; margin-right: 6.5px; } .s4 { margin-left: 6px; margin-right: 9px; }
.tool { width: 57px; height: 52px; display: flex; align-items: center; justify-content: center; border-radius: 6px; }
.tool.on { background: #cce8ff; border: 2px solid #a3d6fb; }
.tool.last { width: 54px; }
.gray { width: 57.5px; }
.gray svg { width: 42px; height: 42px; }
.gray text { font: 700 27px "DejaVu Sans Mono", monospace; text-anchor: middle; fill: #636363; letter-spacing: 0; }
.gray .inv { font-size: 20px; }
.l { fill: none; stroke: #7b7b7b; stroke-width: 2.2; }
.l.w { stroke-width: 3.5; }

.times { height: 99px; flex: none; padding: 24px 0 0 23px; display: flex; }
.times label { line-height: 64px; white-space: nowrap; letter-spacing: -.2px; }
.times .field { height: 61px; line-height: 63px; }
.num { letter-spacing: .6px; }
.t1 { width: 239px; } .t2 { width: 139px; padding-left: 19px; } .t3 { width: 140px; padding-left: 18px; } .times .t3 { letter-spacing: -.66px; } .t4 { width: 104px; padding-left: 18px; } .t5 { width: 95px; padding-left: 18px; }
.f1 { width: 213px; } .f2 { width: 212px; } .f3 { width: 215px; } .f4 { width: 213px; }
.step-btn { width: 63px; height: 54px; margin: 1px 0 0 21.5px; padding-right: 3px; display: flex; align-items: center; justify-content: center; background: #fdfdfd; border: 2px solid #d2d2d2; border-radius: 8px; }
.b2 { padding: 0 0 0 3px; }

.panels { height: 1179px; flex: none; padding-left: 23px; display: flex; gap: 14px; }
.names, .waves { border: 3px solid #8d9199; background: #fff; }
.names { width: 479px; display: flex; flex-direction: column; }
.row { height: 67.36px; flex: none; display: grid; grid-template: 100% / 61px 200px 212px; line-height: 75px; }
.row span { border: solid #dadada; border-width: 0 2px 2px 0; padding-left: 9px; }
.row span:first-child { background: #efefef; padding: 14px 0 0 6px; }
.row span:nth-child(2) { padding-left: 58px; letter-spacing: .5px; }
.row span:nth-child(3) { padding-left: 8px; }
.row svg { width: 44px; height: 44px; }
.row .focus { background: repeating-linear-gradient(90deg, #333 0 2px, transparent 2px 5px) 51px 0/147px 2px no-repeat, repeating-linear-gradient(#333 0 2px, transparent 2px 5px) 51px 0/2px 66px no-repeat; }
.pin-label { font: 24px "DejaVu Sans", sans-serif; fill: #2f7d32; letter-spacing: -.5px; }
.row.head { height: 135px; text-align: center; line-height: 47px; }
.row.head span { border-bottom: 0; background: #fff; }
.row.head span:last-child { padding: 25px 0 0 3px; border-right-color: #fff; }
.row.head span:nth-child(2) { padding: 47px 0 0 2px; letter-spacing: 0; }
.names-scroll { margin-top: auto; height: 42px; padding: 1px 10px 0 11px; background: #f0f0f0; display: flex; align-items: center; justify-content: space-between; }
.waves { width: 1462px; display: flex; border-left-width: 2px; }
.wave-col { width: 1415px; }
.plot { overflow: hidden; }
.ticks text { font: 28px "Noto Sans", sans-serif; letter-spacing: .65px; fill: #111; }
.wave-scroll { height: 41px; width: 1412px; background: #f0f0f0; padding: 17px 45px 0 42px; }
.wave-scroll i { display: block; height: 6px; background: #868686; }
.vscroll { width: 42px; padding: 15px 0 11px 11px; background: #f0f0f0; display: flex; flex-direction: column; justify-content: space-between; }
.status { flex: 1; display: flex; align-items: flex-start; justify-content: flex-end; padding: 26px 7px 0 0; line-height: 60px; }
.pct { width: 126px; padding-left: 12px; border-left: 2px solid #d8d8d8; height: 49px; }
.clock { height: 49px; width: 126px; letter-spacing: 1.1px; border-right: 2px solid #d4d4d4; margin-right: 17px; padding-left: 2px; }
.status svg { margin-top: 30px; }

/* taskbar */
.taskbar { height: 120px; flex: none; padding-left: 52px; display: flex; align-items: center; border-top: 3px solid rgba(255,255,255,.15); color: #fff; background-origin: border-box;
  background-image: linear-gradient(90deg, #1d2423 0, #1b2423 900px, #15292d 1150px, #10263f 1400px, #101f48 1700px, #17164f 2050px, #240f60 2350px, #2e1060 2650px, #30124c 2950px, #2d1644 3200px, #281937 3500px, #241c30 3840px); }
.start, .search, .apps, .tray { margin-top: -2px; }
.search { width: 550px; height: 80px; margin-left: 33px; padding: 0 29px; border-radius: 40px; display: flex; align-items: center; gap: 24px; background: #3a4140; border: 2px solid #4a5150; border-top: 3px solid #626867; font-size: 34px; letter-spacing: -.95px; color: #dcdedd; }
.search span { margin-top: -3px; }
.apps { margin-left: 5px; display: flex; }
.app { width: 110px; height: 100px; display: flex; align-items: center; justify-content: center; position: relative; }
.run::after, .current::after { content: ""; position: absolute; left: 48px; bottom: 2px; width: 15px; height: 8px; border-radius: 4px; background: #98a09f; }
.current { width: 100px; margin-left: 5px; border-radius: 10px; background: #203442; border: 2px solid #2d424e; }
.current::after { left: 28px; width: 40px; bottom: 0; background: #dd9fe6; }
.tray { margin-left: auto; padding-right: 50px; display: flex; align-items: center; }
.g40 { margin-left: 40px; } .g19 { margin-left: 19px; } .g21 { margin-left: 21px; }
.when { width: 178px; padding: 0 1px 5px 0; text-align: right; line-height: 39px; letter-spacing: -.75px; }
.bell { margin-left: 19px; }
```
